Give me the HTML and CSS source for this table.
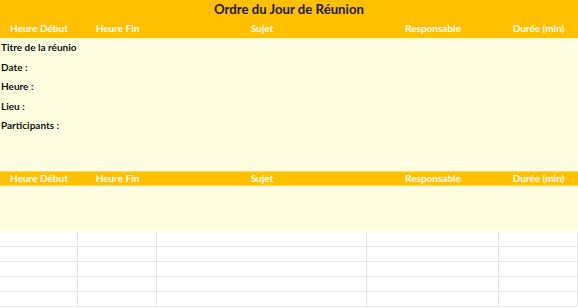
FILE: index.html
```html
<!DOCTYPE html>
<html lang="fr">
<head>
<meta charset="utf-8">
<title>Ordre du Jour de Réunion</title>
<link rel="stylesheet" href="styles.css">
</head>
<body>
<main class="sheet">
  <header class="title">Ordre du Jour de Réunion</header>
  <div class="cols head">
    <div>Heure Début</div>
    <div>Heure Fin</div>
    <div>Sujet</div>
    <div>Responsable</div>
    <div>Durée (min)</div>
  </div>
  <section class="info">
    <div class="label">Titre de la réunio</div>
    <div class="label">Date :</div>
    <div class="label">Heure :</div>
    <div class="label">Lieu :</div>
    <div class="label">Participants :</div>
  </section>
  <div class="cols head head-second">
    <div>Heure Début</div>
    <div>Heure Fin</div>
    <div>Sujet</div>
    <div>Responsable</div>
    <div>Durée (min)</div>
  </div>
  <div class="pale"></div>
  <div class="rows">
    <div class="cols row"><div></div><div></div><div></div><div></div><div></div></div>
    <div class="cols row"><div></div><div></div><div></div><div></div><div></div></div>
    <div class="cols row"><div></div><div></div><div></div><div></div><div></div></div>
    <div class="cols row"><div></div><div></div><div></div><div></div><div></div></div>
    <div class="cols row"><div></div><div></div><div></div><div></div><div></div></div>
  </div>
</main>
</body>
</html>
```
FILE: styles.css
```css
html, body {
  margin: 0;
  padding: 0;
  background: #ffffff;
}

.sheet {
  width: 578px;
  font-family: Lato, "Open Sans", sans-serif;
  font-weight: 700;
}

.title {
  height: 19px;
  background: #ffc000;
  color: #1a1a1a;
  font-size: 13.2px;
  line-height: 19px;
  text-align: center;
}

.cols {
  display: grid;
  grid-template-columns: 78px 79px 210px 132px 79px;
}

.head {
  height: 19px;
  background: #ffc000;
  color: #ffffff;
  font-size: 10px;
  line-height: 19px;
  text-align: center;
}

.head > div {
  white-space: nowrap;
}

.info {
  height: 133px;
  background: #fffde0;
  padding-left: 1px;
  box-sizing: border-box;
}

.label {
  height: 19.6px;
  line-height: 19.6px;
  font-size: 10px;
  color: #111111;
}

.head-second {
  height: 15px;
  line-height: 12px;
  box-sizing: border-box;
  border-top: 1px solid #ffd75a;
  border-bottom: 1px solid #ffd75a;
}

.pale {
  height: 45px;
  background: #fffde0;
}

.rows {
  padding-top: 1px;
}

.row {
  height: 15px;
}

.row > div {
  box-sizing: border-box;
  border-right: 1px solid #e4e4e4;
  border-bottom: 1px solid #e8e8e8;
}
```
